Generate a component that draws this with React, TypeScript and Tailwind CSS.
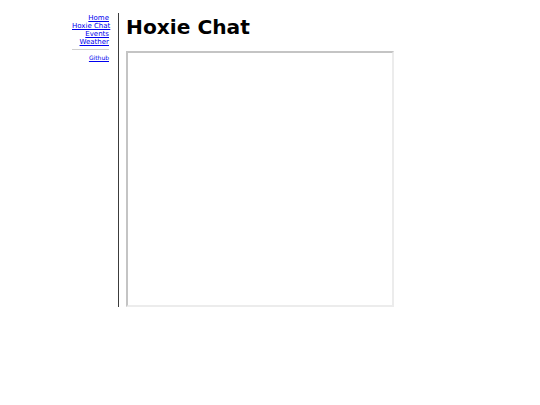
import React from 'react';

const links = ['Home', 'Hoxie Chat', 'Events', 'Weather'];

export default function App() {
  return (
    <div className="min-h-[405px] w-[540px] bg-white" style={{ fontFamily: '"DejaVu Sans", Verdana, sans-serif' }}>
      <div className="flex pt-[13px]">
        {/* sidebar */}
        <nav className="ml-[72px] w-[47px] shrink-0 border-r border-[#3c3c3c] pr-[9px] text-right">
          <ul className="pt-[1px] text-[7px] leading-[8px]">
            {links.map((l) => (
              <li key={l} className="whitespace-nowrap">
                <a href="#" className="text-[#0000ee] underline">
                  {l}
                </a>
              </li>
            ))}
          </ul>
          <hr className="mt-[3px] border-t border-[#cfcfcf]" />
          <div className="mt-[4px] text-[6px] leading-[8px]">
            <a href="#" className="text-[#0000ee] underline">
              Github
            </a>
          </div>
        </nav>

        {/* main */}
        <main className="pl-[7px]">
          <h1 className="mt-[2px] h-[24px] text-[20.2px] font-bold leading-[24px] text-black">Hoxie Chat</h1>
          <div className="mt-[12px] h-[256px] w-[268px] border-2 border-t-[#c4c4c4] border-l-[#c4c4c4] border-b-[#ececec] border-r-[#ececec] bg-white" />
        </main>
      </div>
    </div>
  );
}
